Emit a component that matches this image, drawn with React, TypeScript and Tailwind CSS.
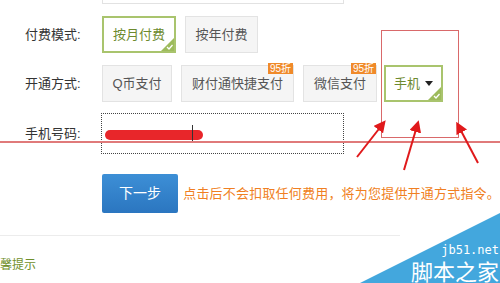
import React from 'react';

const font = { fontFamily: '"Liberation Sans", "Noto Sans CJK SC", sans-serif' };

function Corner() {
  return (
    <svg className="absolute right-0 bottom-0" width="13" height="13" viewBox="0 0 13 13">
      <polygon points="13,0 13,13 0,13" fill="#9dbb5c" />
      <polyline points="6,9 8,11 11.5,7" fill="none" stroke="#fff" strokeWidth="1.3" />
    </svg>
  );
}

function OptionButton({
  label,
  width,
  selected,
  badge,
}: {
  label: string;
  width: string;
  selected?: boolean;
  badge?: boolean;
}) {
  return (
    <div
      className={`relative h-[37px] ${width} flex items-center justify-center text-[13px] ${
        selected
          ? 'border-2 border-[#a9c46d] bg-white text-[#6d8a2e]'
          : 'border border-[#e3e3e3] bg-[#f5f5f5] text-[#555]'
      }`}
    >
      {label}
      {selected && <Corner />}
      {badge && (
        <span className="absolute -top-[3px] right-0 h-[11px] px-[2px] bg-[#f08a2a] text-white text-[10px] leading-[11px]">
          95折
        </span>
      )}
    </div>
  );
}

export default function App() {
  return (
    <div className="relative w-[500px] h-[283px] overflow-hidden bg-white" style={font}>
      <div className="flex flex-col">
        {/* top box partially visible */}
        <div className="ml-[102px] -mt-[26px] w-[242px] h-[30px] border border-[#e2e2e2] bg-white" />

        {/* 付费模式 */}
        <div className="flex items-center mt-[12px] h-[37px]">
          <span className="w-[102px] pl-[25px] text-[13px] text-[#333]">付费模式:</span>
          <div className="flex gap-[9px]">
            <OptionButton label="按月付费" width="w-[74px]" selected />
            <OptionButton label="按年付费" width="w-[73px]" />
          </div>
        </div>

        {/* 开通方式 */}
        <div className="flex items-center mt-[12px] h-[37px]">
          <span className="w-[102px] pl-[25px] text-[13px] text-[#333]">开通方式:</span>
          <div className="flex gap-[9px]">
            <OptionButton label="Q币支付" width="w-[70px]" />
            <OptionButton label="财付通快捷支付" width="w-[113px]" badge />
            <OptionButton label="微信支付" width="w-[74px]" badge />
            <div className="relative h-[37px] w-[59px] -ml-[2px] flex items-center justify-center gap-[5px] border-2 border-[#a9c46d] bg-white text-[13px] text-[#6d8a2e]">
              手机
              <span className="w-0 h-0 border-l-[4px] border-r-[4px] border-t-[5px] border-l-transparent border-r-transparent border-t-[#222]" />
              <Corner />
            </div>
          </div>
        </div>

        {/* 手机号码 */}
        <div className="flex items-center mt-[11px] h-[41px]">
          <span className="w-[101px] pl-[25px] text-[13px] text-[#333]">手机号码:</span>
          <div className="relative w-[243px] h-[41px] border border-dotted border-[#444] bg-white">
            <div className="absolute left-[3px] top-[16px] w-[98px] h-[10px] rounded-full bg-[#e8262a]" />
            <div className="absolute left-[90px] top-[11px] w-[1px] h-[18px] bg-[#333]" />
          </div>
        </div>

        {/* 下一步 */}
        <div className="flex items-center mt-[20px] h-[39px]">
          <button className="ml-[102px] w-[85px] h-[39px] rounded-[2px] bg-gradient-to-b from-[#3d8fd6] to-[#2b76c0] text-white text-[14px]">
            下一步
          </button>
          <span className="ml-[5px] whitespace-nowrap text-[13px] tracking-[0.2px] text-[#f07f22]">
            点击后不会扣取任何费用，将为您提供开通方式指令。
          </span>
        </div>

        <div className="mt-[22px] w-[400px] h-[1px] bg-[#ececec]" />

        <div className="mt-[20px] ml-0 text-[12px] text-[#6f8f2a]">馨提示</div>
      </div>

      {/* annotation: red box */}
      <div className="absolute left-[381px] top-[30px] w-[78px] h-[108px] border-[1.5px] border-[#d9696a]" />
      {/* annotation: red line */}
      <div className="absolute left-0 top-[141px] w-[500px] h-[2px] bg-[#e07a7a]" />

      {/* annotation: arrows */}
      <svg className="absolute left-0 top-0" width="500" height="283" viewBox="0 0 500 283">
        <defs>
          <marker id="ah" markerWidth="6" markerHeight="6" refX="3" refY="3" orient="auto">
            <polygon points="0,0 6,3 0,6" fill="#e0191b" />
          </marker>
        </defs>
        <line x1="357" y1="157" x2="382" y2="125" stroke="#e0191b" strokeWidth="2" markerEnd="url(#ah)" />
        <line x1="404" y1="170" x2="417" y2="126" stroke="#e0191b" strokeWidth="2" markerEnd="url(#ah)" />
        <line x1="478" y1="163" x2="459" y2="127" stroke="#e0191b" strokeWidth="2" markerEnd="url(#ah)" />
        <polygon points="360,283 500,213 500,283" fill="#43a7dd" />
      </svg>

      {/* watermark */}
      <div className="absolute right-[1px] top-[245px] flex flex-col items-end gap-[3px] text-white">
        <span className="text-[12px] leading-[11px]" style={{ fontFamily: '"DejaVu Sans Mono", monospace' }}>
          jb51.net
        </span>
        <span className="text-[22px] leading-[22px]" style={{ fontFamily: '"Noto Sans CJK SC", sans-serif' }}>
          脚本之家
        </span>
      </div>
    </div>
  );
}
